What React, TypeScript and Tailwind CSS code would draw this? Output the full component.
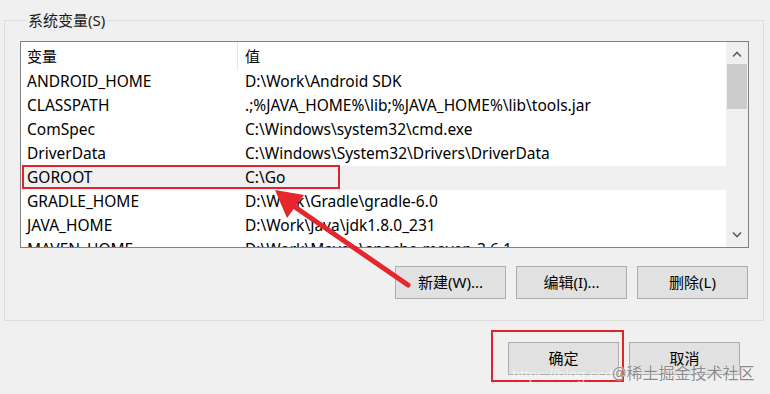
import React from "react";

const rows: [string, string][] = [
  ["ANDROID_HOME", "D:\\Work\\Android SDK"],
  ["CLASSPATH", ".;%JAVA_HOME%\\lib;%JAVA_HOME%\\lib\\tools.jar"],
  ["ComSpec", "C:\\Windows\\system32\\cmd.exe"],
  ["DriverData", "C:\\Windows\\System32\\Drivers\\DriverData"],
  ["GOROOT", "C:\\Go"],
  ["GRADLE_HOME", "D:\\Work\\Gradle\\gradle-6.0"],
  ["JAVA_HOME", "D:\\Work\\Java\\jdk1.8.0_231"],
  ["MAVEN_HOME", "D:\\Work\\Maven\\apache-maven-3.6.1"],
];

const font = {
  fontFamily: '"Noto Sans", "Noto Sans CJK SC", sans-serif',
};

function WinButton({ label }: { label: string }) {
  return (
    <button className="h-[33px] w-[111px] border border-[#adadad] bg-[#e1e1e1] text-[15px] text-black">
      {label}
    </button>
  );
}

export default function App() {
  return (
    <div
      className="relative h-[394px] w-[770px] overflow-hidden bg-[#f0f0f0] text-[15.5px] text-black"
      style={font}
    >
      {/* 系统变量 */}
      <fieldset className="ml-[4px] mt-[10px] h-[311px] w-[760px] border border-[#dcdcdc] pl-[15px]">
        <legend className="ml-[6px] px-[2px] text-[15px] leading-[20px] text-[#1a1a1a]">系统变量(S)</legend>

        <div className="mt-[11px] flex h-[207px] w-[729px] border border-[#828282] bg-white">
          <div className="flex-1 overflow-hidden">
            <div className="flex h-[28px] items-center">
              <div className="h-full w-[216px] pl-[6px] text-[15px] leading-[28px]">变量</div>
              <div className="h-full w-px bg-[#e5e5e5]" />
              <div className="pl-[7px] text-[15px]">值</div>
            </div>
            {rows.map(([name, value]) => (
              <div
                key={name}
                className={
                  "flex h-[24px] items-center whitespace-nowrap " +
                  (name === "GOROOT" ? "bg-[#f0f0f0]" : "")
                }
              >
                <div className="w-[217px] pl-[6px]">{name}</div>
                <div className="pl-[7px]">{value}</div>
              </div>
            ))}
          </div>

          {/* scrollbar */}
          <div className="flex w-[22px] flex-col bg-[#f0f0f0]">
            <div className="flex h-[22px] items-center justify-center pt-[2px]">
              <svg width="10" height="6" viewBox="0 0 10 6">
                <path d="M1 5.5 L5 1.5 L9 5.5" fill="none" stroke="#606060" strokeWidth="1.6" />
              </svg>
            </div>
            <div className="mx-[1px] h-[45px] bg-[#cdcdcd]" />
            <div className="flex-1" />
            <div className="flex h-[22px] items-center justify-center pb-[2px]">
              <svg width="10" height="6" viewBox="0 0 10 6">
                <path d="M1 0.5 L5 4.5 L9 0.5" fill="none" stroke="#606060" strokeWidth="1.6" />
              </svg>
            </div>
          </div>
        </div>

        <div className="mt-[18px] flex w-[728px] justify-end gap-[10px]">
          <WinButton label="新建(W)..." />
          <WinButton label="编辑(I)..." />
          <WinButton label="删除(L)" />
        </div>
      </fieldset>

      <div className="mt-[21px] flex w-[740px] justify-end gap-[10px]">
        <WinButton label="确定" />
        <WinButton label="取消" />
      </div>

      {/* annotations */}
      <div className="absolute left-[22px] top-[165px] h-[24px] w-[318px] border-2 border-[#e0242b]" />
      <div className="absolute left-[491px] top-[330px] h-[52px] w-[133px] border-2 border-[#e0242b]" />
      <svg className="absolute left-0 top-0" width="770" height="394" viewBox="0 0 770 394">
        <line x1="408" y1="285" x2="292" y2="205" stroke="#e5262c" strokeWidth="5" strokeLinecap="round" />
        <polygon points="275,190 304,195 287,218" fill="#e5262c" />
      </svg>

      <div
        className="absolute left-[512px] top-[364px] whitespace-nowrap text-[15px] text-white/60"
        style={{ fontFamily: '"Liberation Sans", sans-serif' }}
      >
        https://blog.csdn
      </div>
      <div
        className="absolute left-[612px] top-[361px] whitespace-nowrap text-[16px] text-[#8a8a8a]"
        style={{ textShadow: "0 0 1px #fff, 0 0 1px #fff" }}
      >
        @稀土掘金技术社区
      </div>
    </div>
  );
}
